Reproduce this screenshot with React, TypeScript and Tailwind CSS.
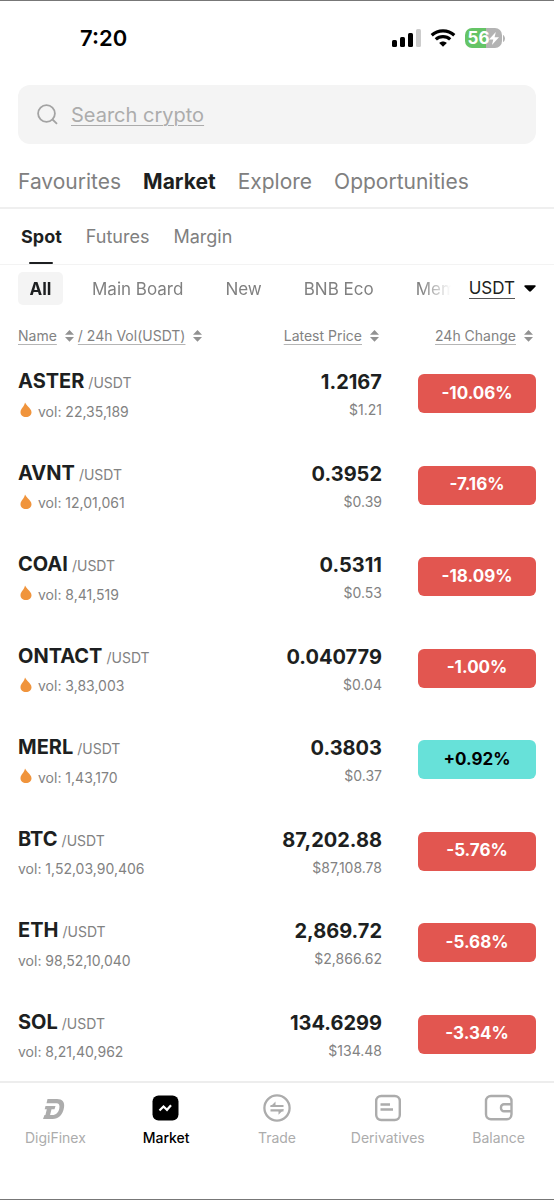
import React, { useState } from "react";

type Coin = {
  symbol: string;
  volume: string;
  price: string;
  usd: string;
  change: string;
  hot?: boolean;
};

const coins: Coin[] = [
  { symbol: "ASTER", volume: "22,35,189", price: "1.2167", usd: "$1.21", change: "-10.06%", hot: true },
  { symbol: "AVNT", volume: "12,01,061", price: "0.3952", usd: "$0.39", change: "-7.16%", hot: true },
  { symbol: "COAI", volume: "8,41,519", price: "0.5311", usd: "$0.53", change: "-18.09%", hot: true },
  { symbol: "ONTACT", volume: "3,83,003", price: "0.040779", usd: "$0.04", change: "-1.00%", hot: true },
  { symbol: "MERL", volume: "1,43,170", price: "0.3803", usd: "$0.37", change: "+0.92%", hot: true },
  { symbol: "BTC", volume: "1,52,03,90,406", price: "87,202.88", usd: "$87,108.78", change: "-5.76%" },
  { symbol: "ETH", volume: "98,52,10,040", price: "2,869.72", usd: "$2,866.62", change: "-5.68%" },
  { symbol: "SOL", volume: "8,21,40,962", price: "134.6299", usd: "$134.48", change: "-3.34%" },
];

function StatusBar() {
  return (
    <div className="flex h-[85px] items-start justify-between border-t border-[#777] pt-[22px] pr-[49px] pl-[80px]">
      <span className="text-[22px] leading-[30px] font-semibold text-black">7:20</span>
      <div className="flex h-[30px] items-center gap-[9px]">
        <svg width="29" height="18" viewBox="0 0 29 18" aria-hidden="true">
          <rect x="0" y="11" width="5" height="7" rx="1.5" fill="#000" />
          <rect x="8" y="8" width="5" height="10" rx="1.5" fill="#000" />
          <rect x="16" y="4" width="5" height="14" rx="1.5" fill="#000" />
          <rect x="24" y="0" width="5" height="18" rx="1.5" fill="#ccc" />
        </svg>
        <svg width="26" height="18" viewBox="0 0 26 18" fill="none" stroke="#000" aria-hidden="true">
          <path d="M1.7 6.2C8 .4 18 .4 24.3 6.2" strokeWidth="3.2" />
          <path d="M5.8 10.4c4-3.8 10.4-3.8 14.4 0" strokeWidth="3.2" />
          <path d="M9.2 14c2.2-2 5.4-2 7.6 0L13 17.8z" fill="#000" stroke="none" />
        </svg>
        <div className="flex items-center gap-px">
          <div className="flex h-[20px] w-[37px] items-center justify-center rounded-[7px] bg-linear-to-r from-[#65c466] from-56% to-[#b3b3b3] to-56% text-white">
            <span className="text-[17px] leading-[20px] font-bold">56</span>
            <svg width="10" height="13" viewBox="0 0 10 13" fill="currentColor" aria-hidden="true">
              <path d="M6.8 0 0 7.4h4.3L2.9 13 10 5.3H5.6z" />
            </svg>
          </div>
          <svg width="2" height="7" viewBox="0 0 2 7" aria-hidden="true">
            <path d="M0 0c2.6 1 2.6 6 0 7z" fill="#b3b3b3" />
          </svg>
        </div>
      </div>
    </div>
  );
}

function Search() {
  return (
    <label className="mx-[18px] flex h-[59px] items-center gap-[12px] rounded-[12px] bg-[#f4f4f4] pr-4 pl-[18px]">
      <svg width="23" height="23" viewBox="0 0 23 23" fill="none" stroke="#a3a3a3" strokeWidth="1.8" aria-hidden="true">
        <circle cx="10.5" cy="10.5" r="8.4" />
        <path d="m16.5 16.5 4.5 4.3" />
      </svg>
      <input
        type="text"
        aria-label="Search crypto"
        placeholder="Search crypto"
        className="min-w-0 flex-1 bg-transparent text-[20px] leading-[28px] outline-none placeholder:text-[#acacac] placeholder:underline placeholder:decoration-1 placeholder:underline-offset-3"
      />
    </label>
  );
}

function Sort() {
  return (
    <svg width="9" height="12" viewBox="0 0 9 12" fill="#929292" aria-hidden="true">
      <path d="M4.5 0 9 4.7H0zM0 7h9l-4.5 4.7z" />
    </svg>
  );
}

function SortButton({ children }: { children: string }) {
  return (
    <button className="inline-flex items-center gap-[8px] text-left">
      <span className="whitespace-pre underline decoration-[#b5b5b5] decoration-1 underline-offset-3">{children}</span>
      <Sort />
    </button>
  );
}

function Flame() {
  return (
    <svg width="12" height="16" viewBox="0 0 12 16" fill="#f0943c" aria-hidden="true">
      <path d="M5 .5c.7 1.500 1.800 2.700 3 4C9.700 6.300 11.500 7.900 11.500 10.200c0 2.800-2.300 4.800-5.500 4.800S.5 13 .5 10.200C.5 8.300 1.400 7 2.700 5.300 3.800 3.800 4.700 2.300 5 .5z" />
    </svg>
  );
}

function MarketTable() {
  return (
    <table className="mx-[18px] border-collapse">
      <thead>
        <tr className="h-[37px] text-[14px] leading-[20px] text-[#828282] [&>th]:p-0 [&>th]:pt-[13px] [&>th]:font-normal">
          <th className="text-left">
            <div className="flex items-center gap-[4px]">
              <SortButton>{"Name"}</SortButton>
              <SortButton>{"/ 24h Vol(USDT)"}</SortButton>
            </div>
          </th>
          <th className="text-right">
            <span className="mr-[3px] inline-flex align-top"><SortButton>Latest Price</SortButton></span>
          </th>
          <th className="w-[154px] text-right">
            <span className="mr-[3px] inline-flex align-top"><SortButton>24h Change</SortButton></span>
          </th>
        </tr>
      </thead>
      <tbody>
        {coins.map((c) => (
          <tr key={c.symbol} className="h-[91px] even:h-[92px] [&>td]:p-0">
            <td>
              <div className="mt-[5px] flex items-baseline gap-[4px] leading-[28px]">
                <span className="text-[20px] font-bold text-[#1d1f21]">{c.symbol}</span>
                <span className="text-[14px] text-[#828282]">/USDT</span>
              </div>
              <div className="flex h-[28px] items-center gap-[6px] text-[14px] text-[#828282]">
                {c.hot && <span className="pb-[2px] pl-[2px]"><Flame /></span>}
                <span>vol: {c.volume}</span>
              </div>
            </td>
            <td className="text-right">
              <div className="mt-[5px] text-[20px] leading-[28px] font-bold text-[#1d1f21]">{c.price}</div>
              <div className="text-[14px] leading-[28px] text-[#828282]">{c.usd}</div>
            </td>
            <td>
              <div
                className={
                  c.change.startsWith("+")
                    ? "ml-auto flex h-[39px] w-[118px] items-center justify-center rounded-[6px] bg-[#67e1d9] text-[17px] font-bold text-black"
                    : "ml-auto flex h-[39px] w-[118px] items-center justify-center rounded-[6px] bg-[#e25650] text-[17px] font-bold text-white"
                }
              >
                {c.change}
              </div>
            </td>
          </tr>
        ))}
      </tbody>
    </table>
  );
}

function LogoIcon() {
  return (
    <svg width="30" height="30" viewBox="0 0 30 30" fill="#acacac" aria-hidden="true">
      <path d="M7.500 6H17c5.500 0 8 3.300 7 8.500C23 21.500 18.500 26 12.500 26H3l1.500-4h8c3.500 0 6-2.500 6.800-6.500.7-3.500-.3-5.300-3-5.300H6.500z" />
      <path d="M5.500 13h10l-1 3.300h-3L9.800 23H5.200l1.600-6.700H4.700z" />
    </svg>
  );
}

function MarketIcon() {
  return (
    <svg width="30" height="30" viewBox="0 0 30 30" fill="none" aria-hidden="true">
      <rect x="1.500" y="2.500" width="26" height="25" rx="6" fill="#000" />
      <path d="m8.500 17.500 4-4 3.500 3.300 4-4.500" stroke="#fff" strokeWidth="2.200" />
    </svg>
  );
}

function TradeIcon() {
  return (
    <svg width="30" height="30" viewBox="0 0 30 30" fill="none" stroke="#acacac" aria-hidden="true">
      <circle cx="15" cy="15" r="12.600" strokeWidth="2.300" />
      <path d="M8.500 13h13M8.500 17.300h13" strokeWidth="2.200" />
      <path d="M8 14 13.500 8.500V13zM22 16.300l-5.500 5.500v-4.500z" fill="#acacac" stroke="none" />
    </svg>
  );
}

function DerivativesIcon() {
  return (
    <svg width="30" height="30" viewBox="0 0 30 30" fill="none" stroke="#acacac" strokeWidth="2.400" aria-hidden="true">
      <rect x="3.200" y="3" width="23.600" height="24" rx="5" />
      <path d="M7.500 11.500h9.500M7.500 16.500h12.500" />
    </svg>
  );
}

function BalanceIcon() {
  return (
    <svg width="30" height="30" viewBox="0 0 30 30" fill="none" stroke="#acacac" strokeWidth="2.400" aria-hidden="true">
      <rect x="2" y="3" width="25.500" height="23.300" rx="5" />
      <path d="M27.500 11.300H20a3 3 0 0 0-3 3v1a3 3 0 0 0 3 3h7.500" />
    </svg>
  );
}

const nav = [
  { label: "DigiFinex", icon: <LogoIcon /> },
  { label: "Market", icon: <MarketIcon />, active: true },
  { label: "Trade", icon: <TradeIcon /> },
  { label: "Derivatives", icon: <DerivativesIcon /> },
  { label: "Balance", icon: <BalanceIcon /> },
];

export default function App() {
  const [quote, setQuote] = useState("USDT");
  return (
    <div className="flex min-h-screen flex-col bg-white font-['Inter','Liberation_Sans',sans-serif] text-[#808080]">
      <StatusBar />
      <Search />

      <nav className="flex h-[65px] items-center gap-[22px] border-b-2 border-[#efefef] px-[18px] pt-[13px] text-[21px] leading-[28px]">
        <a href="#favourites">Favourites</a>
        <a href="#market" className="font-bold text-[#1d1f21]">Market</a>
        <a href="#explore">Explore</a>
        <a href="#opportunities">Opportunities</a>
      </nav>

      <nav className="flex h-[56px] gap-[24px] border-b border-[#f3f3f3] px-[21px] text-[18px] leading-[56px]">
        <a href="#spot" className="flex flex-col items-center font-bold text-[#1d1f21]">
          <span className="h-[53px]">Spot</span>
          <span className="h-[3px] w-[24px] rounded-full bg-[#1d1f21]" />
        </a>
        <a href="#futures">Futures</a>
        <a href="#margin">Margin</a>
      </nav>

      <div className="flex h-[46px] items-center px-[18px] pt-px text-[17px] leading-[24px]">
        <div className="flex min-w-0 flex-1 items-center overflow-hidden whitespace-nowrap mask-r-from-93% mask-r-to-100%">
          <button className="mr-[29px] h-[33px] w-[45px] shrink-0 rounded-[5px] bg-[#f4f4f4] font-bold text-[#1d1f21]">All</button>
          <div className="flex gap-[42px]">
            <button>Main Board</button>
            <button>New</button>
            <button>BNB Eco</button>
            <button>Meme</button>
          </div>
        </div>
        <label className="ml-[18px] flex shrink-0 items-center gap-[9px] text-[#1d1f21]">
          <select
            aria-label="Quote currency"
            value={quote}
            onChange={(e) => setQuote(e.target.value)}
            className="field-sizing-content appearance-none border-b border-[#555] bg-transparent p-0 leading-[20px] outline-none"
          >
            <option>USDT</option>
            <option>USDC</option>
            <option>BTC</option>
          </select>
          <svg width="12" height="7" viewBox="0 0 13 7" aria-hidden="true">
            <path d="M1.500 0h10c1.200 0 1.600 1 .8 1.700L7.500 6.500c-.6.600-1.400.600-2 0L.7 1.700C-.1 1 .3 0 1.500 0z" fill="#000" />
          </svg>
        </label>
      </div>

      <MarketTable />

      <nav className="mt-auto grid h-[119px] grid-cols-5 border-t-2 border-b border-t-[#ededed] border-b-[#777] pt-[10px] text-[14px] leading-[20px] text-[#acacac]">
        {nav.map((n) => (
          <a
            key={n.label}
            href={"#" + n.label.toLowerCase()}
            className={n.active ? "flex flex-col items-center gap-[5px] font-medium text-black" : "flex flex-col items-center gap-[5px]"}
          >
            {n.icon}
            <span>{n.label}</span>
          </a>
        ))}
      </nav>
    </div>
  );
}
